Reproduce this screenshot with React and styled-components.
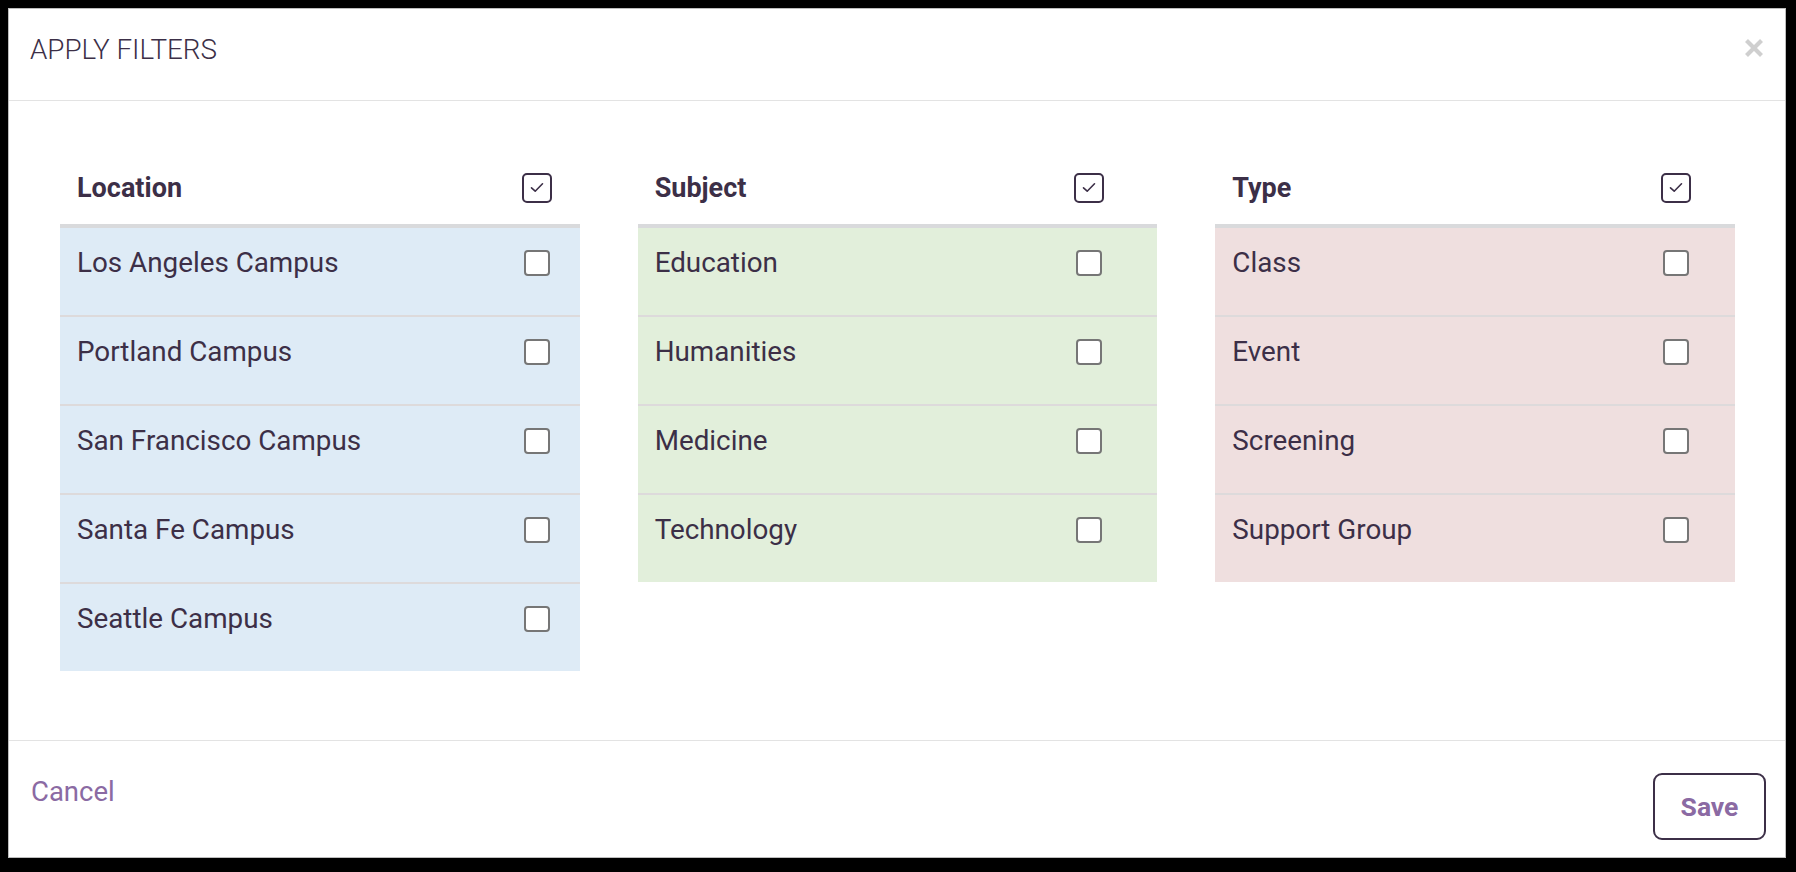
import React, { useState } from "react";
import styled, { createGlobalStyle } from "styled-components";

const GlobalStyle = createGlobalStyle`
  html, body {
    margin: 0;
    padding: 0;
    background: #000;
    font-family: Roboto, "Noto Sans", "Liberation Sans", sans-serif;
    color: #3c2f47;
  }
  * { box-sizing: border-box; }
`;

const Backdrop = styled.div`
  width: 1796px;
  height: 872px;
  padding: 8px 10px 14px 8px;
`;

const Modal = styled.div`
  width: 1778px;
  height: 850px;
  background: #fff;
  border: 1px solid #bdbdbd;
  display: flex;
  flex-direction: column;
`;

const Header = styled.div`
  height: 92px;
  flex-shrink: 0;
  display: flex;
  align-items: center;
  justify-content: space-between;
  padding: 0 20px 10px 21px;
  border-bottom: 1px solid #e3e3e3;
`;

const Title = styled.h2`
  margin: 0;
  font-size: 27.8px;
  font-weight: 300;
  text-transform: uppercase;
  color: #3c2f47;
`;

const CloseButton = styled.button`
  border: none;
  background: none;
  padding: 0;
  width: 22px;
  height: 22px;
  margin-top: -4px;
  cursor: pointer;
  display: flex;
  align-items: center;
  justify-content: center;
`;

const Body = styled.div`
  flex: 1;
  display: grid;
  grid-template-columns: repeat(3, 1fr);
  column-gap: 58px;
  align-items: start;
  padding: 50px 50px 0 51px;
`;

const Column = styled.div`
  display: flex;
  flex-direction: column;
`;

const ColumnHead = styled.div`
  height: 77px;
  display: flex;
  align-items: center;
  justify-content: space-between;
  padding: 0 ${(p) => p.$pr}px 0 17px;
  border-bottom: 4px solid #d9dadc;
`;

const ColumnTitle = styled.span`
  font-size: 27px;
  font-weight: 700;
  color: #3c2f47;
`;

const List = styled.div`
  background: ${(p) => p.$bg};
  display: flex;
  flex-direction: column;
`;

const Row = styled.label`
  height: 87px;
  display: flex;
  align-items: flex-start;
  justify-content: space-between;
  padding: 18px ${(p) => p.$pr}px 0 17px;
  cursor: pointer;
  & + & {
    height: 89px;
    border-top: 2px solid ${(p) => p.$line};
  }
`;

const RowText = styled.span`
  font-size: 27.8px;
  line-height: 33px;
  color: #3c2f47;
`;

const BoxSlot = styled.span`
  width: 30px;
  height: 33px;
  display: flex;
  align-items: center;
  justify-content: center;
`;

const Box = styled.span`
  width: ${(p) => (p.$head ? 30 : 26)}px;
  height: ${(p) => (p.$head ? 30 : 26)}px;
  border: 2px solid ${(p) => (p.$head ? "#3c2f47" : "#767676")};
  border-radius: ${(p) => (p.$head ? 5 : 4)}px;
  background: #fff;
  display: flex;
  align-items: center;
  justify-content: center;
`;

const Footer = styled.div`
  height: 117px;
  flex-shrink: 0;
  border-top: 1px solid #e3e3e3;
  display: flex;
  align-items: flex-start;
  justify-content: space-between;
  padding: 32px 19px 0 22px;
`;

const CancelLink = styled.button`
  border: none;
  background: none;
  padding: 0;
  margin-top: 2px;
  font-family: inherit;
  font-size: 27.5px;
  font-weight: 400;
  color: #8b6aa3;
  cursor: pointer;
`;

const SaveButton = styled.button`
  width: 113px;
  height: 67px;
  border: 2px solid #3c2f47;
  border-radius: 9px;
  background: #fff;
  font-family: inherit;
  font-size: 26.5px;
  font-weight: 700;
  color: #8b6aa3;
  cursor: pointer;
`;

const groups = [
  {
    title: "Location",
    bg: "#deebf6",
    line: "#d5dbe0",
    pr: 28,
    items: [
      "Los Angeles Campus",
      "Portland Campus",
      "San Francisco Campus",
      "Santa Fe Campus",
      "Seattle Campus",
    ],
  },
  {
    title: "Subject",
    bg: "#e2efdb",
    line: "#d6ddd4",
    pr: 53,
    items: ["Education", "Humanities", "Medicine", "Technology"],
  },
  {
    title: "Type",
    bg: "#efdfdf",
    line: "#dddadb",
    pr: 44,
    items: ["Class", "Event", "Screening", "Support Group"],
  },
];

const CheckMark = () => (
  <svg width="14" height="11" viewBox="0 0 14 11" fill="none">
    <path
      d="M1.5 5.8 L5.2 9.2 L12.5 1.8"
      stroke="#3c2f47"
      strokeWidth="1.6"
      strokeLinecap="round"
      strokeLinejoin="round"
    />
  </svg>
);

const CloseIcon = () => (
  <svg width="20" height="20" viewBox="0 0 20 20">
    <path
      d="M2.5 2.5 L17.5 17.5 M17.5 2.5 L2.5 17.5"
      stroke="#cfcfcf"
      strokeWidth="4.2"
      strokeLinecap="butt"
    />
  </svg>
);

const App = () => {
  const [checked, setChecked] = useState({});

  const toggle = (key) =>
    setChecked((prev) => ({ ...prev, [key]: !prev[key] }));

  return (
    <>
      <GlobalStyle />
      <Backdrop>
        <Modal>
          <Header>
            <Title>Apply Filters</Title>
            <CloseButton aria-label="Close">
              <CloseIcon />
            </CloseButton>
          </Header>

          <Body>
            {groups.map((group) => (
              <Column key={group.title}>
                <ColumnHead $pr={group.pr}>
                  <ColumnTitle>{group.title}</ColumnTitle>
                  <BoxSlot>
                    <Box $head>
                      <CheckMark />
                    </Box>
                  </BoxSlot>
                </ColumnHead>
                <List $bg={group.bg}>
                  {group.items.map((item) => {
                    const key = group.title + item;
                    return (
                      <Row
                        key={item}
                        $line={group.line}
                        $pr={group.pr}
                        onClick={() => toggle(key)}
                      >
                        <RowText>{item}</RowText>
                        <BoxSlot>
                          <Box>{checked[key] && <CheckMark />}</Box>
                        </BoxSlot>
                      </Row>
                    );
                  })}
                </List>
              </Column>
            ))}
          </Body>

          <Footer>
            <CancelLink>Cancel</CancelLink>
            <SaveButton>Save</SaveButton>
          </Footer>
        </Modal>
      </Backdrop>
    </>
  );
};

export default App;
